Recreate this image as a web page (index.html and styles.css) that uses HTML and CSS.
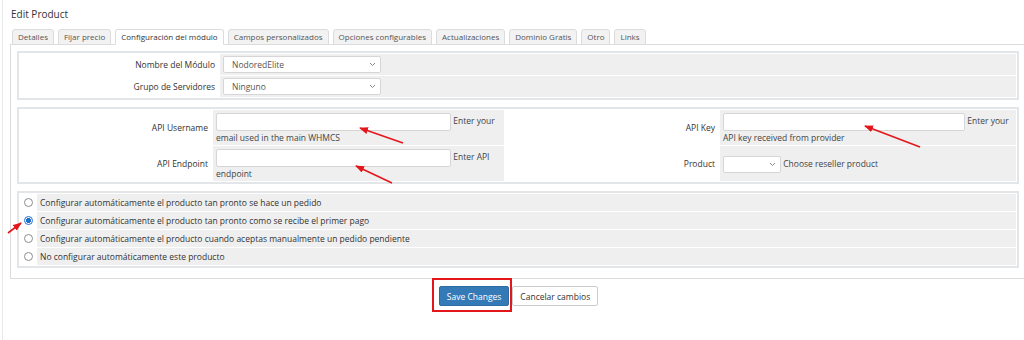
FILE: index.html
```html
<!DOCTYPE html>
<html lang="es">
<head>
<meta charset="UTF-8">
<title>Edit Product</title>
<link rel="stylesheet" href="styles.css">
</head>
<body>

<div class="content">

<h1 class="title">Edit Product</h1>

<ul class="tabs">
  <li>Detalles</li>
  <li>Fijar precio</li>
  <li class="active">Configuración del módulo</li>
  <li>Campos personalizados</li>
  <li>Opciones configurables</li>
  <li>Actualizaciones</li>
  <li>Dominio Gratis</li>
  <li>Otro</li>
  <li>Links</li>
</ul>

<div class="tab-panel">

<table class="form module">
  <tr>
    <td class="fieldlabel">Nombre del Módulo</td>
    <td class="fieldarea"><span class="select wide">NodoredElite<svg class="caret" width="7" height="5" viewBox="0 0 7 5"><path d="M1 1l2.5 2.5L6 1"/></svg></span></td>
  </tr>
  <tr>
    <td class="fieldlabel">Grupo de Servidores</td>
    <td class="fieldarea"><span class="select wide">Ninguno<svg class="caret" width="7" height="5" viewBox="0 0 7 5"><path d="M1 1l2.5 2.5L6 1"/></svg></span></td>
  </tr>
</table>

<table class="form api">
  <colgroup>
    <col class="col-l1"><col class="col-f1"><col class="col-l2"><col>
  </colgroup>
  <tr>
    <td class="fieldlabel">API Username</td>
    <td class="fieldarea"><input class="text-left" type="text"> Enter your email used in the main WHMCS</td>
    <td class="fieldlabel">API Key</td>
    <td class="fieldarea"><input class="text-right" type="text"> Enter your API key received from provider</td>
  </tr>
  <tr>
    <td class="fieldlabel">API Endpoint</td>
    <td class="fieldarea"><input class="text-left" type="text"> Enter API endpoint</td>
    <td class="fieldlabel">Product</td>
    <td class="fieldarea"><span class="select small"><svg class="caret" width="7" height="5" viewBox="0 0 7 5"><path d="M1 1l2.5 2.5L6 1"/></svg></span> Choose reseller product</td>
  </tr>
</table>

<table class="form radios">
  <tr>
    <td class="opt"><input type="radio" name="autosetup"></td>
    <td class="fieldarea">Configurar automáticamente el producto tan pronto se hace un pedido</td>
  </tr>
  <tr>
    <td class="opt"><input type="radio" name="autosetup" checked></td>
    <td class="fieldarea">Configurar automáticamente el producto tan pronto como se recibe el primer pago</td>
  </tr>
  <tr>
    <td class="opt"><input type="radio" name="autosetup"></td>
    <td class="fieldarea">Configurar automáticamente el producto cuando aceptas manualmente un pedido pendiente</td>
  </tr>
  <tr>
    <td class="opt"><input type="radio" name="autosetup"></td>
    <td class="fieldarea">No configurar automáticamente este producto</td>
  </tr>
</table>

</div>

<div class="actions">
  <button class="btn btn-primary">Save Changes</button>
  <button class="btn btn-default">Cancelar cambios</button>
</div>

</div>

<!-- red marks drawn over the screenshot -->
<svg class="marks" width="1024" height="340" viewBox="0 0 1024 340">
  <defs>
    <marker id="head" markerUnits="userSpaceOnUse" markerWidth="9" markerHeight="7" refX="8" refY="3.5" orient="auto">
      <path d="M0 0L9 3.5L0 7z" fill="#e3161c"/>
    </marker>
  </defs>
  <g stroke="#e3161c" stroke-width="1.6" fill="none">
    <line x1="403" y1="143" x2="360" y2="128" marker-end="url(#head)"/>
    <line x1="392" y1="183" x2="356" y2="166" marker-end="url(#head)"/>
    <line x1="920" y1="147" x2="865" y2="126" marker-end="url(#head)"/>
    <line x1="8" y1="233" x2="21" y2="223" marker-end="url(#head)"/>
    <rect x="433" y="279" width="78" height="32" stroke-width="2"/>
  </g>
</svg>

</body>
</html>
```

FILE: styles.css
```css
body{
  margin:0;
  font-family:'Open Sans',sans-serif;
  font-size:8.5px;
  color:#333;
  background:#fff;
  position:relative;
}

.content{
  margin-left:2px;
  border-left:1px solid #e8e8e8;
  padding-left:7px;
  min-height:340px;
}

.title{
  margin:0;
  padding:7px 0 0 1px;
  font-size:10px;
  font-weight:normal;
  line-height:14px;
  color:#333;
}

.tabs{
  display:flex;
  gap:4px;
  list-style:none;
  margin:8px 0 -1px 2px;
  padding:0;
}

.tabs li{
  padding:0 5px;
  font-size:8px;
  line-height:14px;
  border:1px solid #dcdcdc;
  border-radius:3px 3px 0 0;
  background:#f2f2f2;
  color:#555;
}

.tabs li.active{
  position:relative;
  background:#fff;
  border-bottom-color:#fff;
  color:#333;
}

.tab-panel{
  border:1px solid #dcdcdc;
  border-right:none;
  padding:6px 5px 10px 6px;
}

.form{
  width:100%;
  border:2px solid #e2e6e9;
  border-spacing:1px;
  margin-bottom:7px;
}

.form:last-child{
  margin-bottom:0;
}

.fieldlabel{
  width:20%;
  background:#fff;
  text-align:right;
  padding:2px 4px 2px 2px;
  white-space:nowrap;
}

.fieldarea{
  background:#efefef;
  padding:2px 3px;
  line-height:13px;
}

.select{
  display:inline-flex;
  align-items:center;
  justify-content:space-between;
  box-sizing:border-box;
  height:17px;
  padding:0 4px 0 8px;
  background:#fff;
  border:1px solid #d6d6d6;
  border-radius:2px;
  color:#555;
  vertical-align:middle;
}

.select.wide{
  width:158px;
}

.select.small{
  width:58px;
  justify-content:flex-end;
}

.caret{
  fill:none;
  stroke:#888;
  stroke-width:1;
}

.api{
  table-layout:fixed;
}

.api .fieldlabel{
  width:auto;
}

.col-l1{ width:192px; }
.col-f1{ width:291px; }
.col-l2{ width:214px; }

.api .fieldarea{
  color:#444;
  padding:3px 3px 1px;
}

input[type=text]{
  box-sizing:border-box;
  height:18px;
  margin:0;
  border:1px solid #d6d6d6;
  border-radius:2px;
  background:#fff;
  vertical-align:middle;
}

.text-left{ width:235px; }
.text-right{ width:242px; }

.radios .opt{
  width:12px;
  background:#fff;
  padding:0 2px;
  text-align:center;
}

.radios .fieldarea{
  padding:2px 3px;
}

input[type=radio]{
  appearance:none;
  display:block;
  width:9px;
  height:9px;
  margin:0 auto;
  border:1px solid #8d8d8d;
  border-radius:50%;
  background:#fff;
}

input[type=radio]:checked{
  border-color:#1f6fd1;
  background:radial-gradient(circle,#1f6fd1 0 2.3px,#fff 2.8px);
}

.actions{
  display:flex;
  justify-content:center;
  gap:3px;
  padding:7px 0 0 3px;
}

.btn{
  height:20px;
  padding:0 7px;
  font-family:'Open Sans',sans-serif;
  font-size:8.5px;
  border:1px solid;
  border-radius:2px;
}

.btn-primary{
  background:#337ab7;
  border-color:#2e6da4;
  color:#fff;
}

.btn-default{
  background:#fff;
  border-color:#ccc;
  color:#333;
}

.marks{
  position:absolute;
  top:0;
  left:0;
  pointer-events:none;
}
```
